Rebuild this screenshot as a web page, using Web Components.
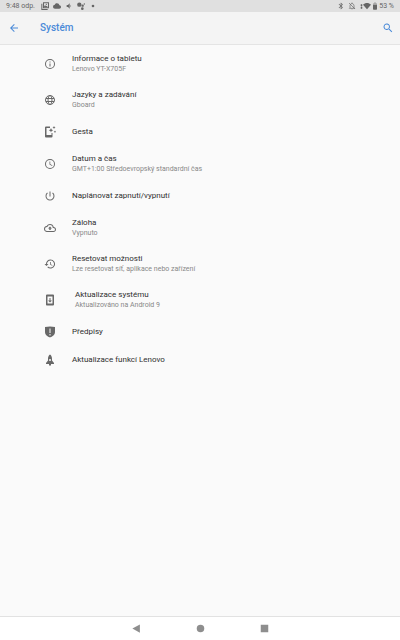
<!DOCTYPE html>
<html lang="cs">
<head>
<meta charset="utf-8">
<meta name="viewport" content="width=device-width, initial-scale=1">
<title>Systém</title>
<style>
  html, body {
    height: 100%;
    margin: 0;
  }
  body {
    --color-accent: #4a8ad8;
    --color-text: #2f2f2f;
    --color-muted: #888;
    --color-icon: #686868;
    background: #fafafa;
    color: var(--color-text);
    font-family: Roboto, "Noto Sans", sans-serif;
    font-size: 8px;
    line-height: 11px;
  }
</style>
</head>
<body>
<settings-screen>
  <status-bar slot="status" time="9:48 odp." battery="53 %"></status-bar>
  <app-bar slot="header">Systém</app-bar>
  <settings-item icon="info">Informace o tabletu<span slot="summary">Lenovo YT-X705F</span></settings-item>
  <settings-item icon="globe">Jazyky a zadávání<span slot="summary">Gboard</span></settings-item>
  <settings-item icon="gesture">Gesta</settings-item>
  <settings-item icon="clock">Datum a čas<span slot="summary">GMT+1:00 Středoevropský standardní čas</span></settings-item>
  <settings-item icon="power">Naplánovat zapnutí/vypnutí</settings-item>
  <settings-item icon="backup">Záloha<span slot="summary">Vypnuto</span></settings-item>
  <settings-item icon="restore">Resetovat možnosti<span slot="summary">Lze resetovat síť, aplikace nebo zařízení</span></settings-item>
  <settings-item icon="update" inset>Aktualizace systému<span slot="summary">Aktualizováno na Android 9</span></settings-item>
  <settings-item icon="shield">Předpisy</settings-item>
  <settings-item icon="rocket">Aktualizace funkcí Lenovo</settings-item>
  <nav-bar slot="nav"></nav-bar>
</settings-screen>

<script>
const icons = {
  info: '<path d="M11 7h2v2h-2zm0 4h2v6h-2zm1-9a10 10 0 1 0 0 20 10 10 0 0 0 0-20zm0 18a8 8 0 1 1 0-16 8 8 0 0 1 0 16z"/>',
  globe: '<g fill="none" stroke="currentColor" stroke-width="2"><circle cx="12" cy="12" r="9"/><ellipse cx="12" cy="12" rx="4" ry="9"/><path d="M4 9h16M4 15h16"/></g>',
  gesture: '<path d="M4 1h8v3H5v14h10v-4h2v7a2 2 0 0 1-2 2H4a2 2 0 0 1-2-2V3a2 2 0 0 1 2-2z"/><path d="m14 4 1.300 3.200L18.500 8.500l-3.200 1.300L14 13l-1.300-3.200-3.200-1.300 3.200-1.300zM20 0l1 2 2 1-2 1-1 2-1-2-2-1 2-1zM22 9l.8 1.700L24 11.500l-1.200.8L22 14l-.8-1.700-1.700-.8 1.700-.8z"/>',
  clock: '<path d="M12 2a10 10 0 1 0 0 20 10 10 0 0 0 0-20zm0 18a8 8 0 1 1 0-16 8 8 0 0 1 0 16zm.5-13H11v6l5.200 3.200.8-1.300-4.500-2.700z"/>',
  power: '<path d="M13 3h-2v10h2zm4.830 2.170-1.420 1.420A6.920 6.920 0 0 1 19 12a7 7 0 1 1-11.420-5.420L6.170 5.170A8.930 8.930 0 0 0 3 12a9 9 0 0 0 18 0 8.930 8.930 0 0 0-3.170-6.830z"/>',
  backup: '<path d="M19.350 10.040A7.490 7.490 0 0 0 12 4C9.110 4 6.600 5.640 5.350 8.040A5.994 5.994 0 0 0 0 14c0 3.310 2.690 6 6 6h13c2.760 0 5-2.240 5-5 0-2.640-2.050-4.780-4.650-4.960zM19 18H6a4 4 0 0 1 0-8h.71a5.500 5.500 0 0 1 10.790 1.500v.5H19a3 3 0 0 1 0 6zM8 13h2.550v3h2.900v-3H16l-4-4z"/>',
  restore: '<path d="M13 3a9 9 0 0 0-9 9H1l3.890 3.890.07.14L9 12H6a7 7 0 1 1 2.060 4.940l-1.420 1.420A9 9 0 1 0 13 3zm-1 5v5l4.280 2.540.72-1.210-3.500-2.080V8z"/>',
  update: '<path d="M18 1H6a2 2 0 0 0-2 2v18c0 1.100.9 2 2 2h12a2 2 0 0 0 2-2V3a2 2 0 0 0-2-2zm-1 18H7V5h10zm-1-6h-3V8h-2v5H8l4 4z"/>',
  shield: '<path fill-rule="evenodd" d="M2 2l10-1 10 1v10c0 6-5 9-10 11-5-2-10-5-10-11zm9 3v9h2V5zm0 11v3h2v-3z"/>',
  rocket: '<path fill-rule="evenodd" d="M12 1c3 2 4 5 4 9v3l4 5v2h-6v3h-4v-3H4v-2l4-5v-3c0-4 1-7 4-9zm0 9a2 2 0 1 0 0 4 2 2 0 0 0 0-4z"/>',
  back: '<path d="M20 11H7.830l5.590-5.590L12 4l-8 8 8 8 1.410-1.410L7.830 13H20z"/>',
  search: '<path d="M15.500 14h-.79l-.28-.27A6.500 6.500 0 1 0 13.730 14.430l.27.28v.79l5 4.990L20.490 19zm-6 0a4.500 4.500 0 1 1 0-9 4.500 4.500 0 0 1 0 9z"/>',
  image: '<path fill-rule="evenodd" d="M6 1h18v18H6zm3 3v12h12V4zM1 5h3v16h16v3H1z"/><path d="m8 16 4-7 3 4 2-2 4 5z"/><circle cx="16" cy="7" r="2"/>',
  cloud: '<path d="M19.350 10.040A7.490 7.490 0 0 0 12 4C9.110 4 6.600 5.640 5.350 8.040A5.994 5.994 0 0 0 0 14c0 3.310 2.690 6 6 6h13c2.760 0 5-2.240 5-5 0-2.640-2.050-4.780-4.650-4.960z"/>',
  sound: '<path d="M5 9v6h4l5 5V4L9 9z"/><path d="M16 8c3 2 3 6 0 8z" opacity=".7"/>',
  assistant: '<circle cx="7" cy="8" r="6.500"/><circle cx="17" cy="11" r="3.500"/><circle cx="22" cy="6" r="2"/><circle cx="16" cy="20" r="4"/>',
  dot: '<circle cx="12" cy="12" r="4"/>',
  bluetooth: '<path d="M17.710 7.710 12 2h-1v7.590L6.410 5 5 6.410 10.590 12 5 17.590 6.410 19 11 14.410V22h1l5.710-5.710-4.300-4.290zM13 5.830l1.880 1.880L13 9.590zm1.880 10.460L13 18.170v-3.760z"/>',
  muted: '<path d="M12 22a2 2 0 0 0 2-2h-4a2 2 0 0 0 2 2z"/><path d="M6 17V11a6 6 0 0 1 4.500-5.700V4a1.500 1.500 0 0 1 3 0v1.300A6 6 0 0 1 18 11v6l2 2H4z" fill="none" stroke="currentColor" stroke-width="2"/><path d="m3 3 18 18" stroke="currentColor" stroke-width="2"/>',
  wifi: '<path d="M0 8C7 1 17 1 24 8L12 22z"/>',
  traffic: '<path d="M12 0l7 6h-4v5H9V6H5zM12 24l7-6h-4v-5H9v5H5z"/>',
  battery: '<path d="M16 4h-2V1h-4v3H8a2 2 0 0 0-2 2v3h12V6a2 2 0 0 0-2-2z" opacity=".5"/><path d="M6 9v12a2 2 0 0 0 2 2h8a2 2 0 0 0 2-2V9z"/>',
  navBack: '<path d="M21 1v22L1 12z"/>',
  navHome: '<circle cx="12" cy="12" r="10"/>',
  navRecent: '<path d="M2 2h20v20H2z"/>'
};

class UiIcon extends HTMLElement {
  constructor() {
    super();
    this.attachShadow({ mode: "open" });
  }

  connectedCallback() {
    this.shadowRoot.innerHTML = `
      <style>
        :host {
          display: block;
          flex: none;
          width: var(--icon-size, 12px);
          height: var(--icon-size, 12px);
        }
        svg {
          display: block;
          width: 100%;
          height: 100%;
          fill: currentColor;
        }
      </style>
      <svg viewBox="0 0 24 24" aria-hidden="true">${icons[this.getAttribute("name")]}</svg>
    `;
  }
}

class StatusBar extends HTMLElement {
  constructor() {
    super();
    this.attachShadow({ mode: "open" });
  }

  connectedCallback() {
    this.shadowRoot.innerHTML = `
      <style>
        :host {
          --icon-size: 8px;
          display: flex;
          justify-content: space-between;
          height: 12px;
          padding: 0 6px;
          background: #e0e0e0;
          color: #666;
          font-size: 7px;
        }
        div {
          display: flex;
          align-items: center;
        }
        .notifications {
          gap: 4px;
        }
        .notifications span {
          margin-right: 2px;
        }
        .system ui-icon:nth-child(-n + 2) {
          margin-right: 3px;
        }
        .traffic {
          --icon-size: 5px;
          margin-right: -1px;
        }
      </style>
      <div class="notifications">
        <span>${this.getAttribute("time")}</span>
        <ui-icon name="image"></ui-icon>
        <ui-icon name="cloud"></ui-icon>
        <ui-icon name="sound"></ui-icon>
        <ui-icon name="assistant"></ui-icon>
        <ui-icon name="dot"></ui-icon>
      </div>
      <div class="system">
        <ui-icon name="bluetooth"></ui-icon>
        <ui-icon name="muted"></ui-icon>
        <ui-icon name="traffic" class="traffic"></ui-icon>
        <ui-icon name="wifi"></ui-icon>
        <ui-icon name="battery"></ui-icon>
        <span>${this.getAttribute("battery")}</span>
      </div>
    `;
  }
}

class AppBar extends HTMLElement {
  constructor() {
    super();
    this.attachShadow({ mode: "open" });
  }

  connectedCallback() {
    this.shadowRoot.innerHTML = `
      <style>
        :host {
          display: flex;
          align-items: center;
          height: 32px;
          padding: 0 6px 0 8px;
          border-bottom: 1px solid #e4e4e4;
          background: #f4f4f4;
          color: var(--color-accent);
        }
        button {
          padding: 0;
          border: 0;
          background: none;
          color: inherit;
        }
        h1 {
          flex: 1;
          margin: 0 0 0 20px;
          font-size: 10px;
          font-weight: 500;
          line-height: 14px;
        }
      </style>
      <button type="button" aria-label="Zpět"><ui-icon name="back"></ui-icon></button>
      <h1><slot></slot></h1>
      <button type="button" aria-label="Hledat"><ui-icon name="search"></ui-icon></button>
    `;
  }
}

class SettingsItem extends HTMLElement {
  constructor() {
    super();
    this.attachShadow({ mode: "open" });
  }

  connectedCallback() {
    this.shadowRoot.innerHTML = `
      <style>
        :host {
          display: block;
        }
        a {
          display: flex;
          align-items: center;
          gap: 16px;
          box-sizing: border-box;
          min-height: 28px;
          padding: 8px 16px 7px 44px;
          color: inherit;
          text-decoration: none;
        }
        :host([inset]) a {
          gap: 19px;
        }
        ui-icon {
          color: var(--color-icon);
        }
        .text {
          display: flex;
          flex-direction: column;
        }
        slot {
          display: block;
        }
        slot[name="summary"] {
          color: var(--color-muted);
          font-size: 7px;
          line-height: 10px;
        }
      </style>
      <a href="#">
        <ui-icon name="${this.getAttribute("icon")}"></ui-icon>
        <div class="text">
          <slot></slot>
          <slot name="summary"></slot>
        </div>
      </a>
    `;
  }
}

class NavBar extends HTMLElement {
  constructor() {
    super();
    this.attachShadow({ mode: "open" });
  }

  connectedCallback() {
    this.shadowRoot.innerHTML = `
      <style>
        :host {
          --icon-size: 9px;
          display: flex;
          justify-content: center;
          align-items: center;
          gap: 55px;
          height: 23px;
          border-top: 1px solid #e2e2e2;
          background: #fff;
          color: #8e8e8e;
        }
        button {
          padding: 0;
          border: 0;
          background: none;
          color: inherit;
        }
      </style>
      <button type="button" aria-label="Zpět"><ui-icon name="navBack"></ui-icon></button>
      <button type="button" aria-label="Domů"><ui-icon name="navHome"></ui-icon></button>
      <button type="button" aria-label="Přehled"><ui-icon name="navRecent"></ui-icon></button>
    `;
  }
}

class SettingsScreen extends HTMLElement {
  constructor() {
    super();
    this.attachShadow({ mode: "open" });
  }

  connectedCallback() {
    this.shadowRoot.innerHTML = `
      <style>
        :host {
          display: flex;
          flex-direction: column;
          min-height: 100%;
        }
        main {
          flex: 1;
        }
      </style>
      <slot name="status"></slot>
      <slot name="header"></slot>
      <main><slot></slot></main>
      <slot name="nav"></slot>
    `;
  }
}

customElements.define("ui-icon", UiIcon);
customElements.define("status-bar", StatusBar);
customElements.define("app-bar", AppBar);
customElements.define("settings-item", SettingsItem);
customElements.define("nav-bar", NavBar);
customElements.define("settings-screen", SettingsScreen);
</script>
</body>
</html>
